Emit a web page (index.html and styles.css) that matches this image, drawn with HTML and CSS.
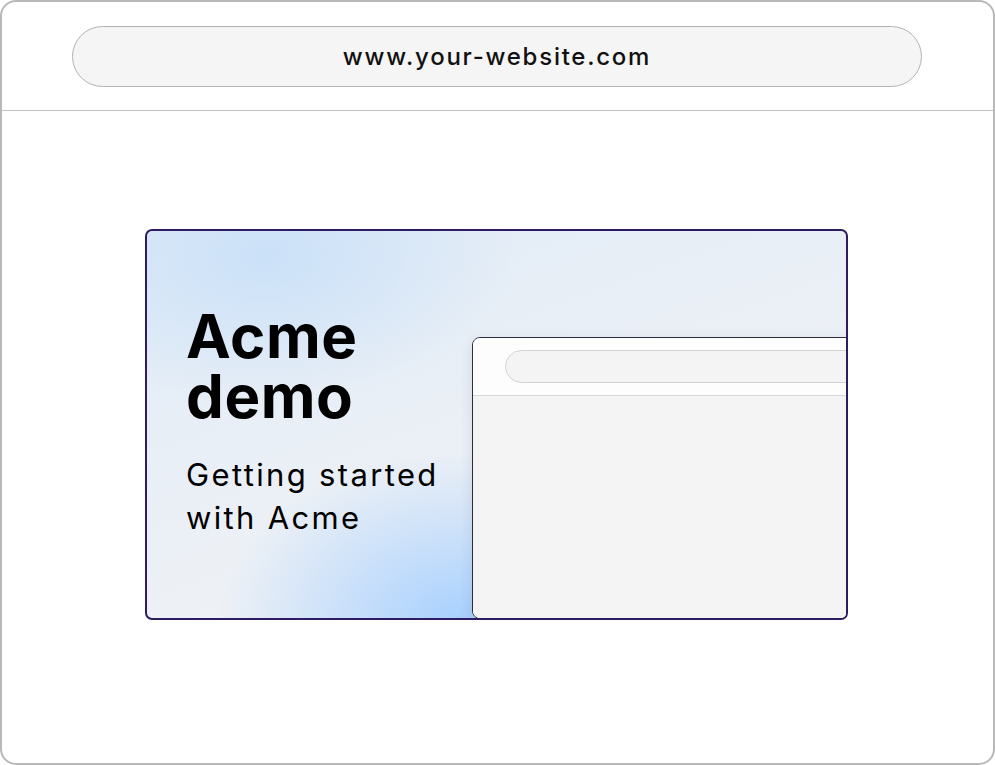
FILE: index.html
```html
<!DOCTYPE html>
<html lang="en">
<head>
<meta charset="utf-8">
<title>Acme demo</title>
<link rel="stylesheet" href="styles.css">
</head>
<body>
<div class="frame">
  <div class="topbar">
    <div class="url">www.your-website.com</div>
  </div>
  <div class="content">
    <div class="card">
      <div class="card-text">
        <h1 class="title"><span class="line">Acme</span><span class="line">demo</span></h1>
        <p class="subtitle">Getting started<br>with Acme</p>
      </div>
      <div class="mini-window">
        <div class="mini-top"><div class="mini-url"></div></div>
        <div class="mini-body"></div>
      </div>
    </div>
  </div>
</div>
</body>
</html>
```
FILE: styles.css
```css
* { box-sizing: border-box; }
html, body { margin: 0; padding: 0; background: #fff; }
body { font-family: Inter, "Noto Sans", "Liberation Sans", sans-serif; color: #0a0a0a; }

.frame {
  width: 995px;
  height: 765px;
  border: 2px solid #b8b8b8;
  border-radius: 16px;
  overflow: hidden;
  display: flex;
  flex-direction: column;
}
.topbar {
  height: 109px;
  border-bottom: 1px solid #c2c2c2;
  display: flex;
  align-items: center;
  padding: 0 71px 0 70px;
}
.url {
  flex: 1;
  height: 61px;
  border: 1px solid #b2b2b2;
  border-radius: 31px;
  background: #f5f5f5;
  display: flex;
  align-items: center;
  justify-content: center;
  font-size: 24px;
  font-weight: 500;
  letter-spacing: 1.75px;
  color: #111;
  padding-top: 1px;
}
.content {
  flex: 1;
  display: flex;
  justify-content: flex-start;
  padding: 118px 0 0 143px;
}
.card {
  width: 703px;
  height: 391px;
  border: 2px solid #2d1c62;
  border-radius: 7px;
  overflow: hidden;
  display: flex;
  padding-left: 39px;
  background:
    radial-gradient(ellipse 250px 175px at 320px 395px, rgba(165,207,255,1), rgba(165,207,255,0.6) 40%, rgba(165,207,255,0) 100%),
    radial-gradient(ellipse 250px 150px at 120px 25px, rgba(203,225,248,1), rgba(203,225,248,0) 100%),
    linear-gradient(160deg, #e0ebf7 0%, #e9eff6 40%, #eef1f5 65%, #f2f3f4 100%);
}
.card-text {
  width: 286px;
  flex-shrink: 0;
  padding-top: 75px;
}
.title {
  margin: 0;
  font-size: 60px;
  line-height: 60px;
  font-weight: 700;
  letter-spacing: 0.6px;
  color: #000;
}
.line { display: block; height: 60px; }
.subtitle {
  margin: 27px 0 0;
  font-size: 31px;
  line-height: 43px;
  font-weight: 400;
  letter-spacing: 2.35px;
  color: #000;
}
.mini-window {
  align-self: flex-end;
  width: 400px;
  height: 282px;
  flex-shrink: 0;
  margin-bottom: -1px;
  border: 1px solid #2e2e3a;
  border-radius: 8px;
  background: #f5f5f5;
  box-shadow: 0 4px 14px rgba(40, 50, 90, 0.12);
  overflow: hidden;
  display: flex;
  flex-direction: column;
}
.mini-top {
  height: 58px;
  background: #fdfdfd;
  border-bottom: 1px solid #d6d6d6;
  padding: 12px 0 0 32px;
}
.mini-url {
  height: 33px;
  border: 1px solid #d2d2d2;
  border-radius: 17px;
  background: #f4f4f4;
}
.mini-body { flex: 1; background: #f4f4f4; }
```
